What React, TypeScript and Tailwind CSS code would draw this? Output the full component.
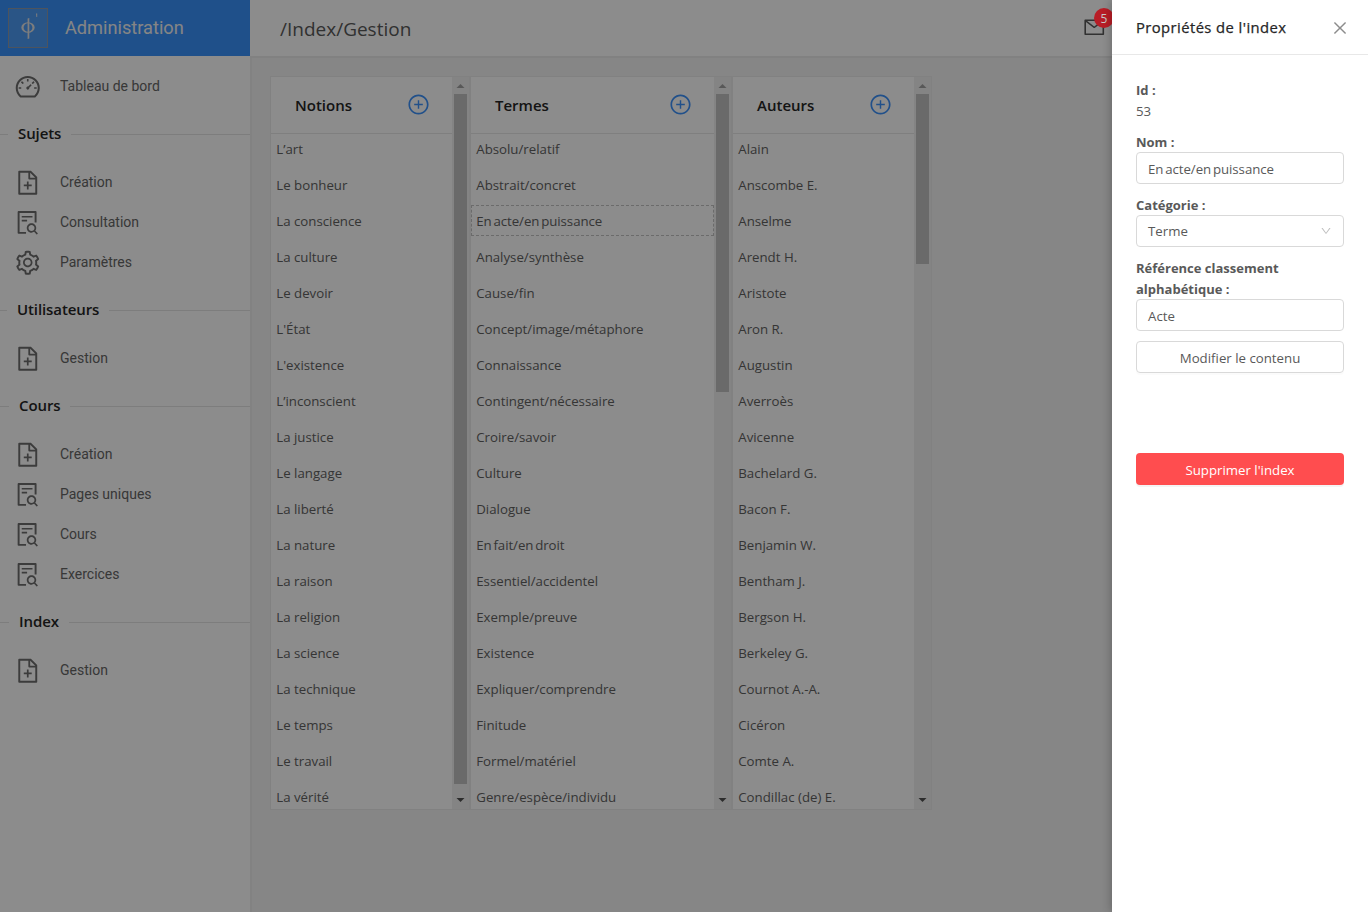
import React from "react";
import {
  AiOutlineDashboard,
  AiOutlineFileAdd,
  AiOutlineFileSearch,
  AiOutlineSetting,
  AiOutlinePlusCircle,
  AiOutlineMail,
  AiOutlineClose,
  AiOutlineDown,
} from "react-icons/ai";

type Entry = { label: string; icon: React.ComponentType<{ className?: string }> };

const sections: { title: string; lead: string; entries: Entry[] }[] = [
  {
    title: "Sujets",
    lead: "w-2",
    entries: [
      { label: "Création", icon: AiOutlineFileAdd },
      { label: "Consultation", icon: AiOutlineFileSearch },
      { label: "Paramètres", icon: AiOutlineSetting },
    ],
  },
  { title: "Utilisateurs", lead: "w-[7px]", entries: [{ label: "Gestion", icon: AiOutlineFileAdd }] },
  {
    title: "Cours",
    lead: "w-[9px]",
    entries: [
      { label: "Création", icon: AiOutlineFileAdd },
      { label: "Pages uniques", icon: AiOutlineFileSearch },
      { label: "Cours", icon: AiOutlineFileSearch },
      { label: "Exercices", icon: AiOutlineFileSearch },
    ],
  },
  { title: "Index", lead: "w-[9px]", entries: [{ label: "Gestion", icon: AiOutlineFileAdd }] },
];

const columns = [
  {
    title: "Notions",
    width: "w-[200px]",
    thumb: "h-[690px]",
    items: ["L’art", "Le bonheur", "La conscience", "La culture", "Le devoir", "L'État", "L'existence", "L’inconscient", "La justice", "Le langage", "La liberté", "La nature", "La raison", "La religion", "La science", "La technique", "Le temps", "Le travail", "La vérité"],
  },
  {
    title: "Termes",
    width: "w-[262px]",
    thumb: "h-[298px]",
    selected: 2,
    items: ["Absolu/relatif", "Abstrait/concret", "En acte/en puissance", "Analyse/synthèse", "Cause/fin", "Concept/image/métaphore", "Connaissance", "Contingent/nécessaire", "Croire/savoir", "Culture", "Dialogue", "En fait/en droit", "Essentiel/accidentel", "Exemple/preuve", "Existence", "Expliquer/comprendre", "Finitude", "Formel/matériel", "Genre/espèce/individu"],
  },
  {
    title: "Auteurs",
    width: "w-[200px]",
    thumb: "h-[170px]",
    items: ["Alain", "Anscombe E.", "Anselme", "Arendt H.", "Aristote", "Aron R.", "Augustin", "Averroès", "Avicenne", "Bachelard G.", "Bacon F.", "Benjamin W.", "Bentham J.", "Bergson H.", "Berkeley G.", "Cournot A.-A.", "Cicéron", "Comte A.", "Condillac (de) E."],
  },
];

function NavItem({ label, icon: Icon }: Entry) {
  return (
    <div className="flex h-10 items-center pl-[13.5px] font-[Roboto,sans-serif] text-sm text-[#666]">
      <Icon className="mt-px size-[27.5px] text-[#6e6e6e]" />
      <span className="ml-[19px]">{label}</span>
    </div>
  );
}

function Scrollbar({ thumb }: { thumb: string }) {
  return (
    <div className="flex w-[17px] shrink-0 flex-col items-center bg-[#f1f1f1]">
      <svg className="h-[17px] w-[17px] shrink-0" viewBox="0 0 17 17"><path d="M4.5 11L8.5 7L12.5 11Z" fill="#a0a0a0" /></svg>
      <div className={"w-[13px] bg-[#c1c1c1] " + thumb} />
      <svg className="mt-auto h-[17px] w-[17px] shrink-0" viewBox="0 0 17 17"><path d="M4.5 6L8.5 10L12.5 6Z" fill="#505050" /></svg>
    </div>
  );
}

function Column({ title, width, thumb, items, selected }: { title: string; width: string; thumb: string; items: string[]; selected?: number }) {
  return (
    <section className={"flex h-[734px] border border-[#ebebeb] bg-white " + width}>
      <div className="min-w-0 flex-1 overflow-hidden">
        <div className="flex h-[57px] items-center justify-between border-b border-[#e8e8e8] pr-[23px] pl-6">
          <h2 className="text-[15px] font-semibold text-[#262626]">{title}</h2>
          <AiOutlinePlusCircle className="-mr-px mb-[2px] size-[23px] text-[#3c92fb]" />
        </div>
        <ul className="-mt-px">
          {items.map((item, i) => (
            <li
              key={item}
              className={
                "mb-[5px] flex h-[31px] items-center border border-dashed pt-0.5 pl-[4.25px] whitespace-nowrap " +
                (i === selected ? "border-[#c4c4c4] " : "border-transparent ") +
                (item.startsWith("En ") ? "tracking-[-0.05px] [word-spacing:-1.6px]" : "")
              }
            >
              {item}
            </li>
          ))}
        </ul>
      </div>
      <Scrollbar thumb={thumb} />
    </section>
  );
}

export default function App() {
  return (
    <div className="relative flex h-[912px] w-[1368px] overflow-hidden bg-[#f5f5f5] font-['Open_Sans',sans-serif] text-[13.25px] font-normal text-[#626262]">
      <aside className="flex w-[250px] shrink-0 flex-col bg-white">
        <div className="flex h-14 items-center bg-[#3a92fc] pl-2">
          <div className="flex size-10 border border-[#8d99ac] bg-[#4e9bf5]">
            <svg viewBox="0 0 38 38" className="size-full" fill="#e4e4e4">
              <path fillRule="evenodd" d="M12.3 18.5a6.7 5.2 0 1 1 13.4 0a6.7 5.2 0 1 1-13.4 0ZM14.6 18.5a4.4 4.3 0 1 0 8.8 0a4.4 4.3 0 1 0-8.8 0Z" />
              <path d="M18.6 9.6L20.3 9V29.5L18.6 30Z" />
              <path d="M27 4.5h1.2V8H27.4Z" />
            </svg>
          </div>
          <span className="ml-[17px] font-[Roboto,sans-serif] text-[18.2px] font-normal text-[#f2f2f2]">Administration</span>
        </div>
        <nav className="pt-2.5 font-normal">
          <NavItem label="Tableau de bord" icon={AiOutlineDashboard} />
          {sections.map((s) => (
            <div key={s.title}>
              <div className="flex h-14 items-center">
                <span className={"h-px bg-[#e4e4e4] " + s.lead} />
                <span className="px-2.5 pb-0.5 text-[15px] font-semibold tracking-[-0.1px] text-[#262626]">{s.title}</span>
                <span className="h-px flex-1 bg-[#e4e4e4]" />
              </div>
              {s.entries.map((e) => <NavItem key={e.label} {...e} />)}
            </div>
          ))}
        </nav>
      </aside>
      <main className="flex flex-1 flex-col">
        <header className="flex h-[58px] shrink-0 items-center border-b-2 border-[#ebebeb] bg-white pl-[30px]">
          <h1 className="pt-[3px] text-[19px] font-normal text-[#595959]">/Index/Gestion</h1>
          <AiOutlineMail className="mr-[262.5px] mb-px ml-auto size-[22.5px] text-[#595959]" />
        </header>
        <div className="flex flex-1 border-l-2 border-[#ededed] pt-[18px] pl-[18px]">
          {columns.map((c) => <Column key={c.title} {...c} />)}
        </div>
      </main>
      <div className="absolute inset-0 bg-black/45" />
      <span className="absolute top-2 left-[1094px] flex size-5 items-center justify-center rounded-full bg-[#b81d26] pt-px text-xs font-normal text-[#c8c8c8]">5</span>
      <aside className="absolute inset-y-0 right-0 w-64 bg-white text-[#595959] shadow-[-2px_0_8px_rgba(0,0,0,0.2)]">
        <div className="flex h-[55px] items-center justify-between border-b border-[#e8e8e8] pr-[19px] pl-6">
          <h2 className="text-[14.8px] font-medium tracking-[0.42px] text-[#262626] [-webkit-text-stroke:0.25px_#262626]">Propriétés de l'index</h2>
          <AiOutlineClose className="mt-0.5 size-[18px] text-[#8c8c8c]" />
        </div>
        <div className="flex flex-col px-6 pt-[25px] leading-[21px]">
          <b className="text-[13px] font-bold">Id :</b>
          <span>53</span>
          <b className="mt-2.5 text-[13px] font-bold">Nom :</b>
          <div className="-mt-px flex h-8 items-center rounded border border-[#d9d9d9] px-[11px] pt-0.5 tracking-[-0.05px] [word-spacing:-1.6px]">En acte/en puissance</div>
          <b className="mt-[11px] text-[13px] font-bold">Catégorie :</b>
          <div className="-mt-px flex h-8 items-center justify-between rounded border border-[#d9d9d9] px-[11px]">
            Terme <AiOutlineDown className="size-3 text-[#bfbfbf]" />
          </div>
          <b className="mt-[11px] text-[13px] font-bold">Référence classement alphabétique :</b>
          <div className="-mt-px flex h-8 items-center rounded border border-[#d9d9d9] px-[11px] pt-0.5">Acte</div>
          <button className="mt-2.5 h-8 rounded border border-[#d9d9d9] pt-0.5 font-normal shadow-[0_2px_0_rgba(0,0,0,0.015)]">Modifier le contenu</button>
          <button className="mt-20 h-8 rounded bg-[#ff4d4f] pt-0.5 font-normal text-white shadow-[0_2px_0_rgba(0,0,0,0.045)]">Supprimer l'index</button>
        </div>
      </aside>
    </div>
  );
}
